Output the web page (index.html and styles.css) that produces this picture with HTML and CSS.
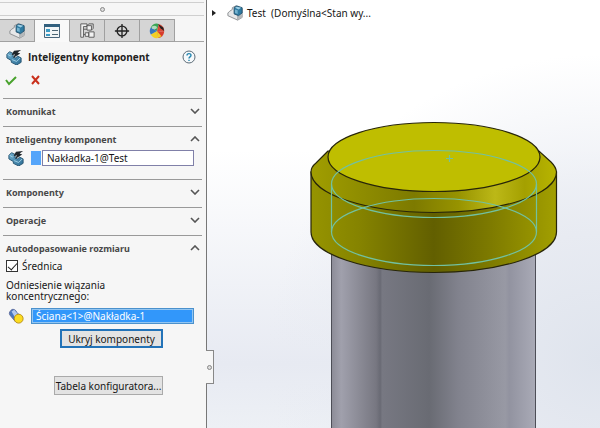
FILE: index.html
```html
<!DOCTYPE html>
<html lang="pl">
<head>
<meta charset="utf-8">
<title>Inteligentny komponent</title>
<link rel="stylesheet" href="styles.css">
</head>
<body>
<svg class="defs" aria-hidden="true">
  <defs>
    <linearGradient id="blue" x1="0" y1="0" x2="1" y2="1"><stop offset="0" stop-color="#6fafd0"/><stop offset="1" stop-color="#2d6d94"/></linearGradient>
    <symbol id="assembly" viewBox="0 0 18 18">
      <path d="M1 9 3 7 6 5V3l4-2 7 3v10l-5 3-11-5z" fill="#e6e7e8" stroke="#85898c" stroke-linejoin="round"/>
      <path d="M12 12v5" fill="none" stroke="#9da1a4"/>
      <path d="m12 13 5-3v4l-5 3z" fill="#b5b8ba"/>
      <path d="m8 3 3-2 6 2v6l-4 3-5-2z" fill="#2f7ba2" stroke="#24516d" stroke-linejoin="round"/>
      <path d="m9 3 2-1 5 1-3 2z" fill="#9fd0e6"/>
      <path d="m9 5 3 1v4l-3-1z" fill="#74b3d0"/>
    </symbol>
    <symbol id="smart" viewBox="0 0 18 18">
      <path d="m1 6 3-3 4 2v4l3 1 2-2 4 2v5l-5 3-6-3v-2l-5-3z" fill="url(#blue)" stroke="#214f6c" stroke-linejoin="round"/>
      <path d="m2 6 3 2 3-3M7 12l5 2 4-4" fill="none" stroke="#a8d5e7"/>
      <path d="m9 2 8-1-4 3 3 1-8 5 2-4-4 1z" fill="#20262b"/>
    </symbol>
    <symbol id="down" viewBox="0 0 10 6"><path d="m1 1 4 4 4-4" fill="none" stroke="#555" stroke-width="1.6"/></symbol>
    <symbol id="up" viewBox="0 0 10 6"><path d="m1 5 4-4 4 4" fill="none" stroke="#555" stroke-width="1.6"/></symbol>
  </defs>
</svg>
<main class="app">
  <aside class="panel">
    <div class="grip"><span class="dot"></span></div>
    <nav class="tabs">
      <button class="tab" aria-label="Drzewo operacji"><svg class="icon"><use href="#assembly"/></svg></button>
      <button class="tab active" aria-label="Właściwości">
        <svg class="icon" viewBox="0 0 16 16"><path d="M.5 1.500h15v13H.5z" fill="#f2f5f6" stroke="#49657a"/><path d="M0 1h16v3H0z" fill="#32607e"/><path d="M2 6h4v3H2zm0 5h4v2H2z" fill="#3b9bc5"/><path d="M8 7.500h6m-6 4h6" stroke="#4d6674"/></svg>
      </button>
      <button class="tab" aria-label="Konfiguracje">
        <svg class="icon" viewBox="0 0 18 18"><path d="M2 1h7v3H5v12H2zM5 7h4M5 13h5" fill="#f2f2f2" stroke="#555"/><path d="M9 3h5v5H9zm2 7h6v6h-6zM7 11h4v4H7z" fill="#f2f2f2" stroke="#555"/><path d="m9 3 2-2h5v5l-2 2" fill="none" stroke="#555"/></svg>
      </button>
      <button class="tab" aria-label="Wymiary">
        <svg class="icon" viewBox="0 0 18 18"><circle cx="9" cy="9" r="5.500" fill="none" stroke="#222" stroke-width="1.5"/><path d="M9 1v16M1 9h16" stroke="#222" stroke-width="1.5"/></svg>
      </button>
      <button class="tab" aria-label="Wygląd">
        <svg class="icon" viewBox="0 0 18 18"><path d="M9 9 2 5a8 8 0 0 1 9-4z" fill="#3aa655"/><path d="M9 9 11 1a8 8 0 0 1 6 9z" fill="#d94a39"/><path d="m9 9 8 1a8 8 0 0 1-7 7z" fill="#d73b2c"/><path d="m9 9 1 8a8 8 0 0 1-8-4z" fill="#f4cf24"/><path d="m9 9 5 6-4 2z" fill="#f4cf24"/><path d="M9 9 2 13a8 8 0 0 1 0-8z" fill="#3977bd"/><path d="m10 1 6 4 1 4-4-3z" fill="#242021"/><ellipse cx="6" cy="5" rx="3" ry="2" fill="#fff" opacity=".6"/></svg>
      </button>
    </nav>
    <header class="title">
      <svg class="icon"><use href="#smart"/></svg>
      <h1>Inteligentny komponent</h1>
      <button class="plain help" aria-label="Pomoc"><svg class="help-icon" viewBox="0 0 14 14"><circle cx="7" cy="7" r="6" fill="#f6f9fb" stroke="#5c6b76"/><path d="M5 5.500C5 3 9 3 9 5.200 9 7 7 6.800 7 8.500M7 9.700v1.400" fill="none" stroke="#2586b0" stroke-width="1.4"/></svg></button>
    </header>
    <div class="actions">
      <button class="plain" aria-label="OK"><svg class="mark" viewBox="0 0 12 12"><path d="m1 6 3 4 7-7" fill="none" stroke="#48a22c" stroke-width="2"/></svg></button>
      <button class="plain" aria-label="Anuluj"><svg class="mark" viewBox="0 0 12 12"><path d="m3 2 7 8M10 2l-7 8" fill="none" stroke="#c9301c" stroke-width="2"/></svg></button>
    </div>
    <section class="group"><h2>Komunikat</h2><svg class="chevron"><use href="#down"/></svg></section>
    <section class="group"><h2><label for="component">Inteligentny komponent</label></h2><svg class="chevron"><use href="#up"/></svg></section>
    <div class="field component"><svg class="icon"><use href="#smart"/></svg><span class="swatch"></span><input id="component" type="text" value="Nakładka-1@Test"></div>
    <section class="group"><h2>Komponenty</h2><svg class="chevron"><use href="#down"/></svg></section>
    <section class="group"><h2>Operacje</h2><svg class="chevron"><use href="#down"/></svg></section>
    <section class="group"><h2>Autodopasowanie rozmiaru</h2><svg class="chevron"><use href="#up"/></svg></section>
    <div class="check"><input id="diameter" type="checkbox" checked><label for="diameter">Średnica</label></div>
    <label class="caption" for="mate">Odniesienie wiązania koncentrycznego:</label>
    <div class="field">
      <svg class="icon" viewBox="0 0 18 18"><path d="M3 3c2-3 6-1 7 2l4 4-6 6-5-6C1 7 1 5 3 3z" fill="#4977bd" stroke="#5b6999"/><path d="m4 4 3-2 5 6-4 3z" fill="#b2c8ee"/><circle cx="12" cy="12" r="5" fill="#fbdc20" stroke="#b48a12"/></svg>
      <input id="mate" class="selected" type="text" value="Ściana&lt;1&gt;@Nakładka-1">
    </div>
    <div class="buttons"><button class="push primary">Ukryj komponenty</button><button class="push">Tabela konfiguratora...</button></div>
    <button class="handle" aria-label="Zwiń panel"><span class="dot"></span></button>
  </aside>
  <section class="stage">
    <svg class="model" viewBox="207 0 393 428" preserveAspectRatio="xMidYMin slice" role="img" aria-label="Model nakładki na walcu">
      <defs>
        <linearGradient id="steel"><stop offset="0" stop-color="#8b8b96"/><stop offset=".05" stop-color="#a0a0ac"/><stop offset=".22" stop-color="#777781"/><stop offset=".24" stop-color="#696a74"/><stop offset=".25" stop-color="#777882"/><stop offset=".48" stop-color="#696b73"/><stop offset=".62" stop-color="#81828d"/><stop offset=".85" stop-color="#9899a4"/><stop offset=".87" stop-color="#9293a0"/><stop offset="1" stop-color="#aaabb7"/></linearGradient>
        <linearGradient id="side"><stop offset="0" stop-color="#969400"/><stop offset=".2" stop-color="#858300"/><stop offset=".5" stop-color="#625f00"/><stop offset=".72" stop-color="#7c7900"/><stop offset="1" stop-color="#a29f00"/></linearGradient>
        <linearGradient id="bevel"><stop offset="0" stop-color="#a19e00"/><stop offset=".2" stop-color="#8f8d00"/><stop offset=".42" stop-color="#7d7a00"/><stop offset=".6" stop-color="#979300"/><stop offset=".75" stop-color="#bcb817"/><stop offset=".87" stop-color="#a4a000"/><stop offset="1" stop-color="#b8b500"/></linearGradient>
      </defs>
      <path d="M331 240h205v200H331z" fill="url(#steel)"/>
      <path d="M331.500 240v190M535.500 240v190" stroke="#4d4e57" fill="none"/>
      <path d="M311 172v60c0 22 55 40.500 123 40.500s122.500-18.500 122.500-40.500v-60z" fill="url(#side)" stroke="#272509" stroke-width="1.2"/>
      <path d="M328 151 316 163Q311 167 311 172C311 194 366 212.500 434 212.500S556.500 194 556.500 172Q556 167 551 162L539 151z" fill="url(#bevel)" stroke="#272509" stroke-width="1.2"/>
      <ellipse cx="434" cy="157" rx="106" ry="34.500" fill="#bfbe00" stroke="#272509" stroke-width="1.2"/>
      <g fill="none" stroke="#72c1a0" stroke-width="1.2"><ellipse cx="434" cy="184" rx="102.500" ry="33.500"/><ellipse cx="434" cy="232" rx="102.500" ry="33.500"/><path d="M331.500 184v48M536.500 184v48M446 158.500h7M449.500 155v7"/></g>
    </svg>
    <div class="tree"><button class="plain expand" aria-label="Rozwiń"></button><svg class="icon"><use href="#assembly"/></svg><span>Test&nbsp; (Domyślna&lt;Stan wy...</span></div>
  </section>
</main>
</body>
</html>
```
FILE: styles.css
```css
* { box-sizing: border-box; }
body { margin: 0; font-family: "Noto Sans", "Open Sans", sans-serif; font-size: 10px; color: #161616; }
button, input { font: inherit; color: inherit; }
svg { display: block; flex: none; }
.defs { position: absolute; width: 0; height: 0; }
.app { display: flex; min-height: 100vh; }
.panel { position: relative; flex: none; width: 207px; background: #f6f6f6; border-right: 1px solid #777; }
.grip { display: flex; align-items: center; justify-content: center; height: 14px; margin: 2px 2px 3px 0; border: 1px solid #cfcfcf; border-width: 1px 0; }
.dot { width: 5px; height: 5px; border: 1px solid #888; border-radius: 50%; background: #ddd; }
.tabs { display: flex; height: 23px; margin-right: 2px; border-bottom: 1px solid #a5a5a5; }
.tab { display: flex; align-items: center; justify-content: center; width: 35px; height: 23px; padding: 0; background: #d5d5d5; border: 1px solid #a0a0a0; border-left: 0; }
.tab.active { background: #f9f9f9; border-bottom-color: #f9f9f9; }
.icon { width: 16px; height: 16px; }
.plain { display: block; padding: 0; border: 0; background: transparent; }
.title { display: flex; align-items: center; gap: 6px; height: 29px; padding: 0 10px 0 6px; }
h1, h2 { margin: 0; font-weight: 700; white-space: nowrap; }
h1 { font-family: "Open Sans", "Noto Sans", sans-serif; font-size: 10px; color: #222; }
h2 { font-size: 9px; color: #484848; }
.help { margin-left: auto; }
.help-icon { width: 14px; height: 14px; }
.actions { display: flex; align-items: flex-start; gap: 12px; height: 27px; padding: 3px 5px; }
.mark { width: 12px; height: 12px; }
.group { display: flex; align-items: center; justify-content: space-between; height: 28px; margin: 0 4px 0 3px; padding: 0 2px 3px 3px; border-top: 1px solid #999; }
.chevron { width: 10px; height: 6px; }
.field { display: flex; align-items: center; height: 16px; padding: 0 12px 0 8px; }
.field input { flex: 1; min-width: 0; height: 16px; margin: 0; padding: 0 4px; border: 1px solid #8080a8; background: #fff; }
.component { margin: -4px 0 13px; }
.swatch { width: 10px; height: 14px; margin: 0 1px 0 7px; background: #55a5fa; }
.field .selected { margin-left: 7px; background: #3297fa; color: #fff; border: 1px solid #4b91cc; outline: 1px solid #93c6f2; outline-offset: -2px; }
.check { display: flex; align-items: center; gap: 4px; height: 14px; margin-top: -4px; padding-left: 6px; }
.check input { appearance: none; display: grid; place-items: center; width: 12px; height: 12px; margin: 0; border: 1px solid #333; background: #fff; }
.check input::after { content: ""; width: 8px; height: 4px; border: solid #222; border-width: 0 0 1px 1px; transform: translateY(-1px) rotate(-48deg); }
.caption { display: block; width: 140px; margin: 7px 0 6px 6px; line-height: 11px; }
.buttons { display: flex; flex-direction: column; align-items: flex-end; gap: 28px; margin-top: 5px; padding-right: 43px; }
.push { height: 19px; width: 109px; padding: 0; line-height: 14px; border: 1px solid #aaa; background: #e3e3e3; white-space: nowrap; }
.primary { width: 103px; border: 2px solid #2373b8; }
.handle { position: absolute; left: 206px; top: 350px; z-index: 1; display: grid; place-items: center; width: 8px; height: 34px; padding: 0; border: 1px solid #888; border-left: 0; background: #f6f6f6; }
.stage { position: relative; flex: 1; min-width: 0; overflow: hidden; background: radial-gradient(ellipse at 100% 84%, #dfe4ed 0, #e8ebf2 25%, transparent 60%), linear-gradient(#fff 35%, #e7eaf2 85%, #edf0f5); }
.model { position: absolute; inset: 0; width: 100%; height: 100%; }
.tree { position: relative; display: flex; align-items: center; height: 26px; padding-left: 5px; white-space: nowrap; }
.expand { width: 0; height: 0; margin-right: 11px; border: solid transparent; border-width: 3px 0 3px 4px; border-left-color: #222; }
.tree span { margin-left: 4px; }
```
